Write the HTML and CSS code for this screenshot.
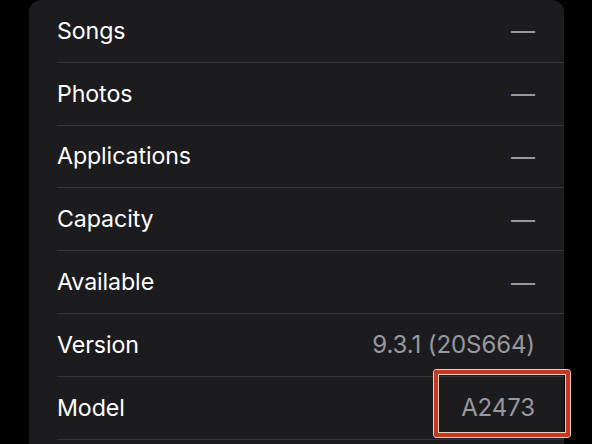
FILE: index.html
```html
<!DOCTYPE html>
<html>
<head>
<meta charset="utf-8">
<link rel="stylesheet" href="styles.css">
</head>
<body>
<div class="screen">
  <div class="card">
    <div class="row"><span class="label">Songs</span><span class="value">—</span></div>
    <div class="row"><span class="label">Photos</span><span class="value">—</span></div>
    <div class="row"><span class="label">Applications</span><span class="value">—</span></div>
    <div class="row"><span class="label">Capacity</span><span class="value">—</span></div>
    <div class="row"><span class="label">Available</span><span class="value">—</span></div>
    <div class="row"><span class="label">Version</span><span class="value">9.3.1 (20S664)</span></div>
    <div class="row"><span class="label">Model</span><span class="value">A2473</span></div>
  </div>
  <div class="highlight"></div>
</div>
</body>
</html>
```
FILE: styles.css
```css
html, body {
  margin: 0;
  padding: 0;
  background: #000;
  width: 592px;
  height: 444px;
  overflow: hidden;
}
.screen {
  position: relative;
  width: 592px;
  height: 444px;
  overflow: hidden;
  font-family: Inter, "Noto Sans", "Liberation Sans", sans-serif;
}
.card {
  margin-left: 29px;
  width: 535px;
  background: #1c1c1e;
  border-radius: 12px 12px 0 0;
  padding-left: 28px;
  padding-bottom: 20px;
  box-sizing: border-box;
}
.row {
  height: 61.8px;
  border-bottom: 1px solid #363638;
  display: flex;
  align-items: center;
  justify-content: space-between;
  padding-right: 29px;
}
.label {
  color: #fff;
  font-size: 23.2px;
  letter-spacing: -0.1px;
}
.value {
  color: #98989e;
  font-size: 24px;
  letter-spacing: -0.1px;
}
.highlight {
  position: absolute;
  left: 434px;
  top: 370px;
  width: 128px;
  height: 59px;
  border: 4px solid #c8371f;
  border-radius: 3px;
  box-shadow: 0 0 0 1px #efcfc2, inset 0 0 0 1px #efcfc2;
}
```
